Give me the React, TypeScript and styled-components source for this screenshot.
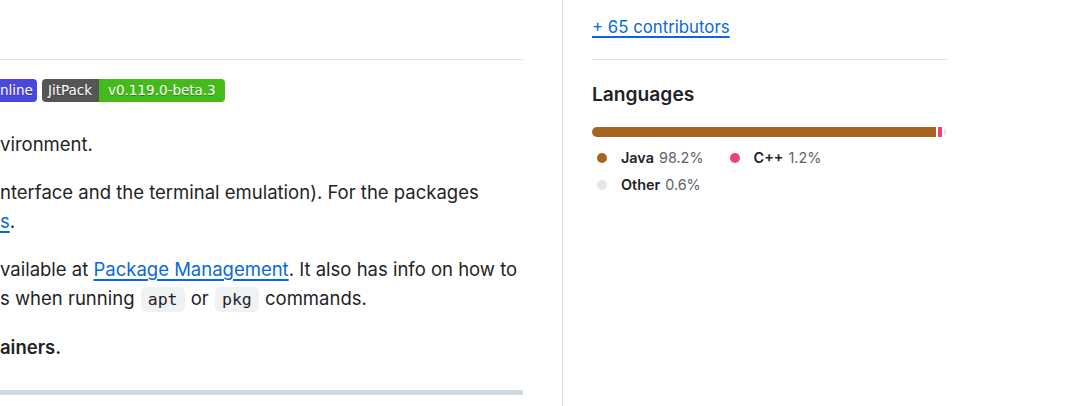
import React from "react";
import styled, { createGlobalStyle } from "styled-components";

const Global = createGlobalStyle`
  html, body { margin: 0; padding: 0; background: #ffffff; overflow: hidden; }
  body { font-family: Inter, "Noto Sans", "Liberation Sans", sans-serif; color: #1f2328; }
`;

const Page = styled.div`
  display: flex;
  width: 1080px;
  height: 406px;
  overflow: hidden;
`;

const Main = styled.main`
  width: 523px;
  flex-shrink: 0;
  display: flex;
  flex-direction: column;
`;

const MainHeader = styled.div`
  height: 59px;
  border-bottom: 1px solid #e1e4e8;
`;

const Article = styled.article`
  padding-top: 19px;
  font-size: 18.5px;
  line-height: 29px;
`;

const BadgeRow = styled.div`
  display: flex;
  gap: 5px;
  height: 23px;
  margin-bottom: 28px;
`;

const Shield = styled.span<{ $round?: string }>`
  display: inline-flex;
  height: 23px;
  border-radius: ${(p) => p.$round ?? "4px"};
  overflow: hidden;
  font-family: "DejaVu Sans", Verdana, sans-serif;
  font-size: 13.5px;
  color: #ffffff;
  line-height: 23px;
`;

const ShieldPart = styled.span<{ $bg: string; $padLeft?: number; $padRight?: number }>`
  background: ${(p) => p.$bg};
  padding: 0 ${(p) => p.$padRight ?? 6}px 0 ${(p) => p.$padLeft ?? 6}px;
  text-shadow: 0 1px 0 rgba(1, 1, 1, 0.3);
  white-space: nowrap;
`;

const Para = styled.p<{ $bold?: boolean }>`
  margin: 0 0 19px 0;
  white-space: nowrap;
  font-weight: ${(p) => (p.$bold ? 600 : 400)};
`;

const Link = styled.a`
  color: #0969da;
  text-decoration: underline;
  text-underline-offset: 3px;
  text-decoration-thickness: 1.5px;
`;

const Code = styled.code`
  font-family: "DejaVu Sans Mono", "Liberation Mono", monospace;
  font-size: 16.5px;
  background: #eff1f3;
  border-radius: 6px;
  padding: 3px 7px;
  margin: 0 1px;
`;

const Rule = styled.hr`
  height: 5px;
  border: 0;
  margin: 28px 0 0 0;
  background: #d1d9e0;
`;

const Sidebar = styled.aside`
  margin-left: 39px;
  border-left: 1px solid #d8dee4;
  padding-left: 29px;
  display: flex;
  flex-direction: column;
`;

const SideSection = styled.div`
  width: 356px;
`;

const ContribSection = styled(SideSection)`
  height: 60px;
  box-sizing: border-box;
  padding-top: 15px;
  border-bottom: 1px solid #e1e4e8;
`;

const ContribLink = styled.a`
  font-size: 16.8px;
  line-height: 24px;
  color: #0969da;
  text-decoration: underline;
  text-underline-offset: 3px;
  text-decoration-thickness: 1.5px;
`;

const LangSection = styled(SideSection)`
  padding-top: 20px;
`;

const Heading = styled.h2`
  margin: 0 0 18px 0;
  font-size: 19.2px;
  line-height: 29px;
  font-weight: 600;
`;

const Bar = styled.div`
  display: flex;
  height: 10px;
  width: 354px;
  border-radius: 6px;
  overflow: hidden;
  background: #ffffff;
  gap: 2px;
`;

const BarItem = styled.span<{ $color: string }>`
  background: ${(p) => p.$color};
  display: block;
  height: 100%;
`;

const Legend = styled.ul`
  list-style: none;
  margin: 10px 0 0 0;
  padding: 0;
  display: flex;
  flex-wrap: wrap;
  width: 300px;
`;

const LegendItem = styled.li`
  display: inline-flex;
  align-items: center;
  font-size: 14.4px;
  line-height: 21px;
  margin: 0 21px 6px 0;
`;

const Dot = styled.span<{ $color: string }>`
  width: 10px;
  height: 10px;
  border-radius: 50%;
  background: ${(p) => p.$color};
  margin: 0 14px 0 5px;
`;

const LangName = styled.span`
  font-weight: 600;
  color: #1f2328;
  margin-right: 5px;
`;

const LangPct = styled.span`
  color: #59636e;
`;

const LegendBreak = styled.li`
  flex-basis: 100%;
  height: 0;
`;

const languages = [
  { name: "Java", pct: 98.2, color: "#a8651f" },
  { name: "C++", pct: 1.2, color: "#f0407a" },
  { name: "Other", pct: 0.6, color: "#e4e6e9" },
];

export default function App() {
  return (
    <>
      <Global />
      <Page>
        <Main>
          <MainHeader />
          <Article>
            <BadgeRow>
              <Shield $round="0 4px 4px 0">
                <ShieldPart $bg="#4848dc" $padLeft={0} $padRight={4}>nline</ShieldPart>
              </Shield>
              <Shield>
                <ShieldPart $bg="#555555" $padLeft={6} $padRight={7}>JitPack</ShieldPart>
                <ShieldPart $bg="#44bb1a" $padLeft={9} $padRight={9}>v0.119.0-beta.3</ShieldPart>
              </Shield>
            </BadgeRow>
            <Para>vironment.</Para>
            <Para>
              nterface and the terminal emulation). For the packages
              <br />
              <Link href="#">s</Link>.
            </Para>
            <Para>
              vailable at <Link href="#">Package Management</Link>. It also has info on how to
              <br />
              s when running <Code>apt</Code> or <Code>pkg</Code> commands.
            </Para>
            <Para $bold>ainers.</Para>
            <Rule />
          </Article>
        </Main>
        <Sidebar>
          <ContribSection>
            <ContribLink href="#">+ 65 contributors</ContribLink>
          </ContribSection>
          <LangSection>
            <Heading>Languages</Heading>
            <Bar>
              {languages.map((l) => (
                <BarItem key={l.name} $color={l.color} style={{ width: `${l.pct}%` }} />
              ))}
            </Bar>
            <Legend>
              <LegendItem>
                <Dot $color={languages[0].color} />
                <LangName>Java</LangName>
                <LangPct>98.2%</LangPct>
              </LegendItem>
              <LegendItem>
                <Dot $color={languages[1].color} />
                <LangName>C++</LangName>
                <LangPct>1.2%</LangPct>
              </LegendItem>
              <LegendBreak />
              <LegendItem>
                <Dot $color={languages[2].color} />
                <LangName>Other</LangName>
                <LangPct>0.6%</LangPct>
              </LegendItem>
            </Legend>
          </LangSection>
        </Sidebar>
      </Page>
    </>
  );
}
